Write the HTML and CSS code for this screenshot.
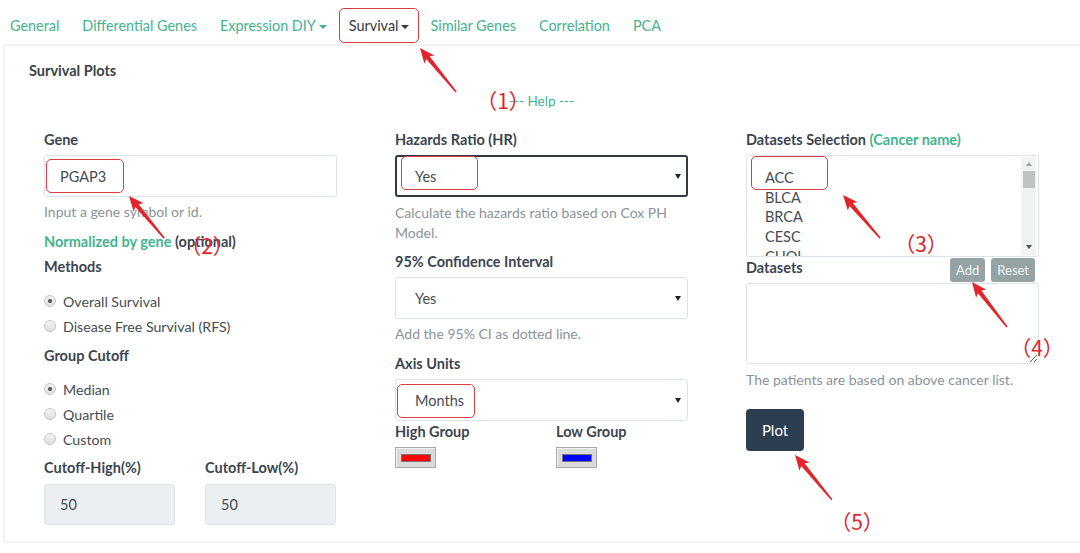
FILE: index.html
```html
<!DOCTYPE html>
<html>
<head>
<meta charset="utf-8">
<link rel="stylesheet" href="styles.css">
</head>
<body>
<nav class="tabs">
  <a class="tab">General</a>
  <a class="tab">Differential Genes</a>
  <a class="tab">Expression DIY<span class="caret"></span></a>
  <a class="tab active">Survival<span class="caret"></span></a>
  <a class="tab">Similar Genes</a>
  <a class="tab">Correlation</a>
  <a class="tab">PCA</a>
</nav>

<section class="panel">
  <h4 class="panel-title">Survival Plots</h4>
  <div class="help-link">--- Help ---</div>

  <div class="form-grid">
    <div class="col">
      <label class="lbl">Gene</label>
      <input class="input" type="text" value="PGAP3">
      <p class="hint hint-gene">Input a gene symbol or id.</p>
      <div class="lbl norm"><span class="teal">Normalized by gene</span> (optional)</div>
      <div class="lbl methods">Methods</div>
      <div class="radios radios-methods">
        <div class="radio"><span class="dot checked"></span>Overall Survival</div>
        <div class="radio"><span class="dot"></span>Disease Free Survival (RFS)</div>
      </div>
      <div class="lbl group-cutoff">Group Cutoff</div>
      <div class="radios radios-cutoff">
        <div class="radio"><span class="dot checked"></span>Median</div>
        <div class="radio"><span class="dot"></span>Quartile</div>
        <div class="radio"><span class="dot"></span>Custom</div>
      </div>
      <div class="pair cutoffs">
        <div>
          <div class="lbl">Cutoff-High(%)</div>
          <input class="input input-grey" type="text" value="50">
        </div>
        <div>
          <div class="lbl">Cutoff-Low(%)</div>
          <input class="input input-grey" type="text" value="50">
        </div>
      </div>
    </div>

    <div class="col">
      <label class="lbl">Hazards Ratio (HR)</label>
      <div class="select focused"><span>Yes</span><span class="tri"></span></div>
      <p class="hint hint-hr">Calculate the hazards ratio based on Cox PH Model.</p>
      <div class="lbl ci-label">95% Confidence Interval</div>
      <div class="select"><span>Yes</span><span class="tri"></span></div>
      <p class="hint hint-ci">Add the 95% CI as dotted line.</p>
      <div class="lbl axis-label">Axis Units</div>
      <div class="select"><span>Months</span><span class="tri"></span></div>
      <div class="pair groups">
        <div>
          <div class="lbl">High Group</div>
          <div class="swatch"><span class="swatch-bar red"></span></div>
        </div>
        <div>
          <div class="lbl">Low Group</div>
          <div class="swatch"><span class="swatch-bar blue"></span></div>
        </div>
      </div>
    </div>

    <div class="col">
      <label class="lbl">Datasets Selection <span class="teal">(Cancer name)</span></label>
      <div class="listbox">
        <div class="list-items">
          <div>ACC</div>
          <div>BLCA</div>
          <div>BRCA</div>
          <div>CESC</div>
          <div>CHOL</div>
        </div>
        <div class="scrollbar">
          <span class="arrow-up"></span>
          <span class="thumb"></span>
          <span class="arrow-down"></span>
        </div>
      </div>
      <div class="ds-row">
        <div class="lbl">Datasets</div>
        <div class="btns">
          <button class="btn-grey">Add</button>
          <button class="btn-grey">Reset</button>
        </div>
      </div>
      <textarea class="textarea"></textarea>
      <p class="hint hint-ds">The patients are based on above cancer list.</p>
      <button class="btn-plot">Plot</button>
    </div>
  </div>
</section>

<div class="annotations">
  <div class="mark m-survival"></div>
  <div class="mark m-gene"></div>
  <div class="mark m-hr"></div>
  <div class="mark m-months"></div>
  <div class="mark m-acc"></div>
  <svg class="arrows" width="1080" height="553" viewBox="0 0 1080 553">
    <g fill="#e3242b">
      <polygon transform="translate(420,48) rotate(-129.3)" points="0,0 -15,-6.5 -12.5,-2.2 -57,-0.8 -57,0.8 -12.5,2.2 -15,6.5"/>
      <polygon transform="translate(129,196) rotate(-129.8)" points="0,0 -15,-6.5 -12.5,-2.2 -55,-0.8 -55,0.8 -12.5,2.2 -15,6.5"/>
      <polygon transform="translate(843,195) rotate(-130.7)" points="0,0 -15,-6.5 -12.5,-2.2 -57,-0.8 -57,0.8 -12.5,2.2 -15,6.5"/>
      <polygon transform="translate(972,282) rotate(-127.9)" points="0,0 -15,-6.5 -12.5,-2.2 -57,-0.8 -57,0.8 -12.5,2.2 -15,6.5"/>
      <polygon transform="translate(795,455) rotate(-129.4)" points="0,0 -15,-6.5 -12.5,-2.2 -58,-0.8 -58,0.8 -12.5,2.2 -15,6.5"/>
    </g>
  </svg>
  <span class="num n1">（1）</span>
  <span class="num n2">（2）</span>
  <span class="num n3">（3）</span>
  <span class="num n4">（4）</span>
  <span class="num n5">（5）</span>
</div>
</body>
</html>
```

FILE: styles.css
```css
html, body {
  margin: 0;
  padding: 0;
  background: #ffffff;
}
body {
  position: relative;
  width: 1080px;
  height: 553px;
  overflow: hidden;
  font-family: Lato, "Noto Sans", "Liberation Sans", sans-serif;
  font-size: 15px;
  color: #3b4550;
}

/* nav */
.tabs {
  display: flex;
  align-items: center;
  height: 44px;
  padding-left: 10px;
  column-gap: 23px;
}
.tab {
  color: #42b48f;
  font-size: 14.4px;
  line-height: 20px;
  white-space: nowrap;
  display: flex;
  align-items: center;
  padding-top: 7px;
}
.tab.active {
  color: #333a42;
  margin-left: -1px;
  margin-right: -2px;
}
.caret {
  display: inline-block;
  width: 0;
  height: 0;
  margin-left: 3px;
  margin-top: 2px;
  border-left: 4px solid transparent;
  border-right: 4px solid transparent;
  border-top: 4px solid currentColor;
}

/* panel */
.panel {
  margin-left: 3px;
  width: 1100px;
  border: 2px solid #f1f2f3;
  border-right: none;
  padding: 15px 0 0 24px;
  box-sizing: border-box;
  height: 499px;
}
.panel-title {
  margin: 0;
  font-size: 14.5px;
  line-height: 20px;
  font-weight: 700;
  color: #3b4248;
}
.help-link {
  width: 995px;
  margin: 10px 0 0 15px;
  text-align: center;
  color: #42b48f;
  font-size: 13.5px;
  line-height: 20px;
}

.form-grid {
  display: grid;
  grid-template-columns: 293px 293px 293px;
  column-gap: 58px;
  margin: 19px 0 0 15px;
  width: 995px;
}
.col {
  display: flex;
  flex-direction: column;
  align-items: stretch;
}
.lbl {
  display: block;
  font-weight: 700;
  font-size: 14.5px;
  line-height: 20px;
  color: #3b4550;
  white-space: nowrap;
}
.col > label.lbl {
  margin-bottom: 5px;
}
.teal {
  color: #42b48f;
}

.input {
  box-sizing: border-box;
  width: 100%;
  height: 42px;
  border: 1px solid #dde3e8;
  border-radius: 3px;
  padding: 0 15px;
  font-family: inherit;
  font-size: 14.5px;
  color: #454b52;
  background: #fff;
  outline: none;
  margin: 0;
}
.input-grey {
  background: #eceff1;
  height: 41px;
}

.hint {
  margin: 0;
  color: #8a939b;
  font-size: 14px;
  line-height: 20px;
}
.hint-gene { margin-top: 5px; }
.norm { margin-top: 10px; }
.methods { margin-top: 5px; }
.radios { display: flex; flex-direction: column; row-gap: 5px; }
.radios-methods { margin-top: 14px; }
.group-cutoff { margin-top: 10px; }
.radios-cutoff { margin-top: 13px; }
.radio {
  display: flex;
  align-items: center;
  height: 20px;
  font-size: 14.2px;
  color: #454b52;
  white-space: nowrap;
}
.dot {
  box-sizing: border-box;
  width: 12px;
  height: 12px;
  border-radius: 50%;
  border: 1px solid #c4c7ca;
  background: linear-gradient(#f4f4f4, #dedede);
  margin: 0 7px 0 0;
  position: relative;
  flex: none;
}
.dot.checked::after {
  content: "";
  position: absolute;
  left: 3px;
  top: 3px;
  width: 4px;
  height: 4px;
  border-radius: 50%;
  background: #555;
}

.pair {
  display: grid;
  grid-template-columns: 131px 131px;
  column-gap: 30px;
}
.cutoffs { margin-top: 9px; }
.cutoffs .lbl { margin-bottom: 6px; }

/* selects */
.select {
  box-sizing: border-box;
  height: 42px;
  border: 1px solid #dde3e8;
  border-radius: 3px;
  display: flex;
  align-items: center;
  justify-content: space-between;
  padding: 0 6px 0 19px;
  font-size: 14.5px;
  color: #454b52;
  background: #fff;
}
.select.focused {
  border: 2px solid #2f3a42;
  padding-left: 18px;
  padding-right: 5px;
}
.tri {
  width: 0;
  height: 0;
  border-left: 3px solid transparent;
  border-right: 3px solid transparent;
  border-top: 5px solid #222;
}
.hint-hr { margin-top: 6px; }
.ci-label { margin-top: 9px; margin-bottom: 5px; }
.hint-ci { margin-top: 5px; }
.axis-label { margin-top: 10px; margin-bottom: 5px; }
.groups { margin-top: 1px; }
.groups .lbl { margin-bottom: 5px; }
.swatch {
  box-sizing: border-box;
  width: 41px;
  height: 21px;
  background: #dadada;
  border: 1px solid #a9a9a9;
  box-shadow: inset 1px 1px 0 #f3f3f3;
  display: flex;
  align-items: center;
  justify-content: center;
}
.swatch-bar {
  width: 30px;
  height: 8px;
  border: 1px solid #777;
  box-sizing: border-box;
}
.swatch-bar.red { background: #ff0000; }
.swatch-bar.blue { background: #0000ff; }

/* listbox */
.listbox {
  box-sizing: border-box;
  height: 102px;
  border: 1px solid #dde3e8;
  border-radius: 3px;
  display: flex;
  overflow: hidden;
}
.list-items {
  flex: 1;
  padding: 12px 0 0 18px;
  font-size: 14.5px;
  line-height: 19.7px;
  color: #454b52;
  overflow: hidden;
}
.scrollbar {
  width: 15px;
  margin: 1px 2px 1px 0;
  background: #f2f2f2;
  display: flex;
  flex-direction: column;
  align-items: center;
}
.arrow-up {
  margin-top: 5px;
  width: 0;
  height: 0;
  border-left: 3px solid transparent;
  border-right: 3px solid transparent;
  border-bottom: 4px solid #a3a3a3;
}
.thumb {
  margin-top: 5px;
  width: 12px;
  height: 17px;
  background: #c1c1c1;
}
.arrow-down {
  margin-top: auto;
  margin-bottom: 6px;
  width: 0;
  height: 0;
  border-left: 3px solid transparent;
  border-right: 3px solid transparent;
  border-top: 4px solid #505050;
}
.ds-row {
  display: flex;
  justify-content: space-between;
  align-items: flex-start;
  margin-top: 1px;
}
.btns {
  display: flex;
  column-gap: 6px;
  margin-right: 4px;
}
.btn-grey {
  height: 24px;
  padding: 0 6px;
  border: none;
  border-radius: 3px;
  background: #95a3a5;
  color: #f4f6f6;
  font-family: inherit;
  font-size: 13px;
  line-height: 24px;
}
.textarea {
  box-sizing: border-box;
  display: block;
  width: 100%;
  height: 81px;
  margin: 1px 0 0 0;
  border: 1px solid #dde3e8;
  border-radius: 3px;
  resize: vertical;
  font-family: inherit;
  outline: none;
}
.hint-ds { margin-top: 6px; }
.btn-plot {
  align-self: flex-start;
  margin-top: 19px;
  width: 58px;
  height: 42px;
  border: none;
  border-radius: 4px;
  background: #2c3e50;
  color: #ffffff;
  font-family: inherit;
  font-size: 15px;
}

/* annotation overlay */
.annotations {
  position: absolute;
  left: 0;
  top: 0;
  width: 1080px;
  height: 553px;
  pointer-events: none;
}
.arrows {
  position: absolute;
  left: 0;
  top: 0;
}
.mark {
  position: absolute;
  box-sizing: border-box;
  border: 1.5px solid #dc3b42;
  border-radius: 5px;
}
.m-survival { left: 339px; top: 8px; width: 80px; height: 35px; }
.m-gene { left: 46px; top: 159px; width: 78px; height: 34px; }
.m-hr { left: 401px; top: 156px; width: 77px; height: 34px; }
.m-months { left: 397px; top: 384px; width: 78px; height: 34px; }
.m-acc { left: 751px; top: 156px; width: 77px; height: 34px; }
.num {
  position: absolute;
  transform: translate(-50%, -50%);
  font-family: "Noto Sans CJK SC", "Noto Sans", sans-serif;
  font-size: 21px;
  line-height: 26px;
  color: #e3242b;
  white-space: nowrap;
}
.n1 { left: 503px; top: 100px; }
.n2 { left: 207px; top: 245px; }
.n3 { left: 921px; top: 243px; }
.n4 { left: 1037px; top: 347px; }
.n5 { left: 857px; top: 521px; }
```
